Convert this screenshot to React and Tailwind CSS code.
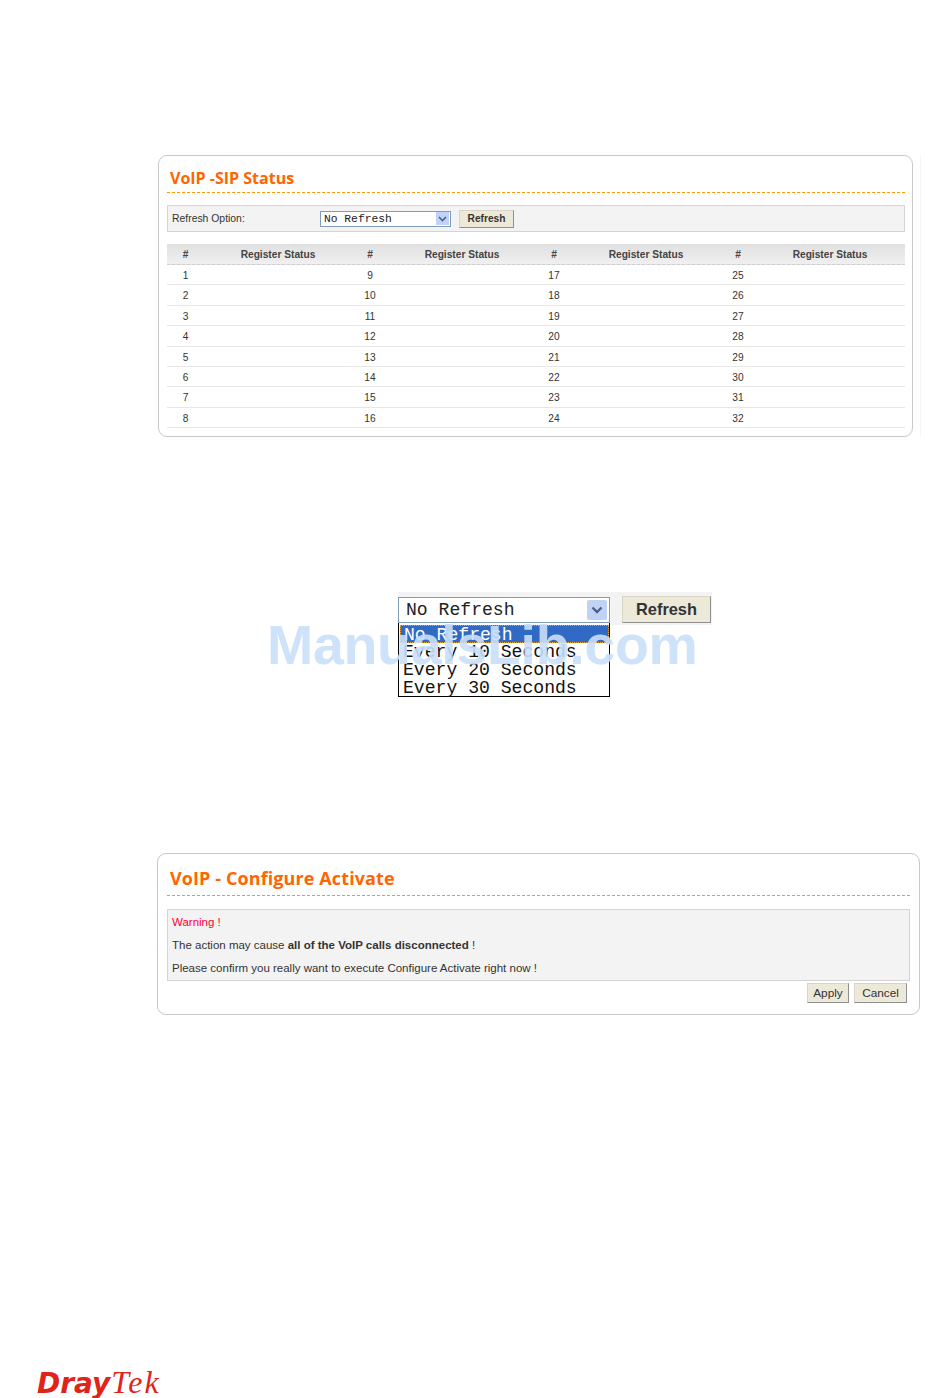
const rows = [0, 1, 2, 3, 4, 5, 6, 7]
const sans = { fontFamily: '"Liberation Sans", Arial, sans-serif' }

function PanelTitle({ children, className }) {
  return (
    <h2 className={`font-['Open_Sans',sans-serif] font-bold text-[#ff6600] leading-none ${className}`}>
      {children}
    </h2>
  )
}

function OldButton({ children, className = '' }) {
  return (
    <button className={`bg-[#ece9d8] border border-[#d8d5c5] border-r-[#8f8f8f] border-b-[#8f8f8f] text-[#333] font-['Liberation_Sans',Arial,sans-serif] ${className}`}>
      {children}
    </button>
  )
}

function SipStatus() {
  return (
    <div className="ml-[158px] w-[763px] border-r border-[#f6f6f6] pt-0">
      <div className="w-[755px] h-[282px] border border-[#c8c8c8] rounded-[9px] pl-2 pr-[7px] bg-white">
        <PanelTitle className="text-[16px] pt-[14px] pb-[6px] pl-[3px]">VoIP -SIP Status</PanelTitle>
        <div className="border-t border-dashed border-t-[#ff9900]" />
        <div className="mt-3 h-[27px] bg-[#f3f3f3] border border-[#d4d4d4] flex items-center text-[10px] text-[#333]">
          <span className="w-[152px] pl-1 text-[10.4px] font-['Liberation_Sans',Arial,sans-serif]">Refresh Option:</span>
          <div className="w-[131px] h-[16px] bg-white border border-[#7f9db9] flex items-center justify-between pr-px font-['Liberation_Mono',monospace] text-[11.3px] pl-[3px] text-[#222]">
            <span className="pt-px">No Refresh</span>
            <span className="w-[13px] h-[13px] bg-[#c1d2f7] flex items-center justify-center">
              <svg width="9" height="6" viewBox="0 0 9 6"><path d="M1 1l3.5 3.5L8 1" fill="none" stroke="#4d6185" strokeWidth="1.6" /></svg>
            </span>
          </div>
          <OldButton className="ml-2 w-[55px] h-[18px] text-[10.2px] font-bold">Refresh</OldButton>
        </div>
        <div className="mt-3 text-[10.2px] text-[#333] font-['Liberation_Sans',Arial,sans-serif]">
          <div className="grid grid-cols-[37px_148px_36px_148px_36px_148px_36px_148px] h-[21px] pt-[2px] items-center text-center font-bold text-[#444] bg-gradient-to-b from-[#e0e0e0] to-[#f0f0f0] border-b border-dashed border-[#cfcfcf]">
            {[0, 1, 2, 3].map(c => (
              <div key={c} className="contents">
                <span>#</span>
                <span>Register Status</span>
              </div>
            ))}
          </div>
          {rows.map(r => (
            <div key={r} className="grid grid-cols-[37px_148px_36px_148px_36px_148px_36px_148px] h-[20.4px] pt-[2px] items-center text-center border-b border-[#e6e6e6]">
              {[1, 9, 17, 25].map(start => (
                <div key={start} className="contents">
                  <span>{start + r}</span>
                  <span />
                </div>
              ))}
            </div>
          ))}
        </div>
      </div>
    </div>
  )
}

function RefreshDropdown() {
  return (
    <div className="ml-[398px] mt-[155px] w-[314px] relative">
      <div className="bg-[#f3f3f3] h-[33px] flex items-start">
        <div className="mt-[5px] w-[212px] h-[26px] bg-white border border-[#7f9db9] flex items-center justify-between pl-[7px] pr-[2px] font-['Liberation_Mono',monospace] text-[18.1px] text-[#222]">
          <span className="pt-px">No Refresh</span>
          <span className="w-[20px] h-[20px] bg-[#c1d2f7] rounded-[2px] flex items-center justify-center">
            <svg width="12" height="8" viewBox="0 0 12 8"><path d="M1.5 1.5L6 6l4.5-4.5" fill="none" stroke="#4d6185" strokeWidth="2.4" /></svg>
          </span>
        </div>
        <OldButton className="ml-3 mt-[4px] w-[89px] h-[27px] text-[16.4px] font-bold">Refresh</OldButton>
      </div>
      <div className="-mt-[2px] w-[212px] h-[74px] border border-black border-t-0 bg-white pt-[2px] pl-[4px] font-['Liberation_Mono',monospace] text-[18.1px] leading-[18px] text-[#111] relative z-0">
        <div className="bg-[#316ac5] text-white h-[18px] -ml-[3px] pl-[3px] border border-dotted border-[#e8a33d]">No Refresh</div>
        <div>Every 10 Seconds</div>
        <div>Every 20 Seconds</div>
        <div>Every 30 Seconds</div>
      </div>
      <div className="absolute left-[-131px] top-[24px] text-[#c9dff9] opacity-90 text-[55.5px] leading-[58px] whitespace-nowrap z-10 font-['Liberation_Sans',Arial,sans-serif] font-bold tracking-[-0.3px]">
        ManualsLib.com
      </div>
    </div>
  )
}

function ConfigureActivate() {
  return (
    <div className="ml-[157px] mt-[156px] w-[763px] h-[162px] border border-[#c8c8c8] rounded-[9px] px-[9px] bg-white">
      <PanelTitle className="text-[18px] pt-[15px] pb-[8px] pl-[3px] tracking-[0.1px]">VoIP - Configure Activate</PanelTitle>
      <div className="border-t border-dashed border-t-[#ff9900]" />
      <div className="mt-[13px] h-[72px] bg-[#f3f3f3] border border-[#d4d4d4] px-1 pt-[5px] text-[11.5px] leading-[14px] text-[#333]" style={sans}>
        <p className="text-[#ff0033]">Warning !</p>
        <p className="mt-[9px]">The action may cause <b>all of the VoIP calls disconnected</b> !</p>
        <p className="mt-[9px]">Please confirm you really want to execute Configure Activate right now !</p>
      </div>
      <div className="flex justify-end gap-[5px] mt-[2px] pr-[3px]">
        <OldButton className="w-[42px] h-[20px] pt-px text-[11.8px] text-[#222]">Apply</OldButton>
        <OldButton className="w-[53px] h-[20px] pt-px text-[11.8px] text-[#222]">Cancel</OldButton>
      </div>
    </div>
  )
}

export default function App() {
  return (
    <div className="w-[950px] h-[1398px] bg-white overflow-hidden pt-[155px] relative">
      <SipStatus />
      <RefreshDropdown />
      <ConfigureActivate />
      <div className="absolute left-[37px] bottom-[2px] h-[28px] flex items-baseline leading-[28px] text-[#e2231a] whitespace-nowrap">
        <span className="font-['DejaVu_Sans',sans-serif] font-bold italic text-[28px]">Dray</span>
        <span className="font-['Liberation_Serif',serif] italic text-[32px] tracking-[2px] ml-[1px]">Tek</span>
      </div>
    </div>
  )
}
